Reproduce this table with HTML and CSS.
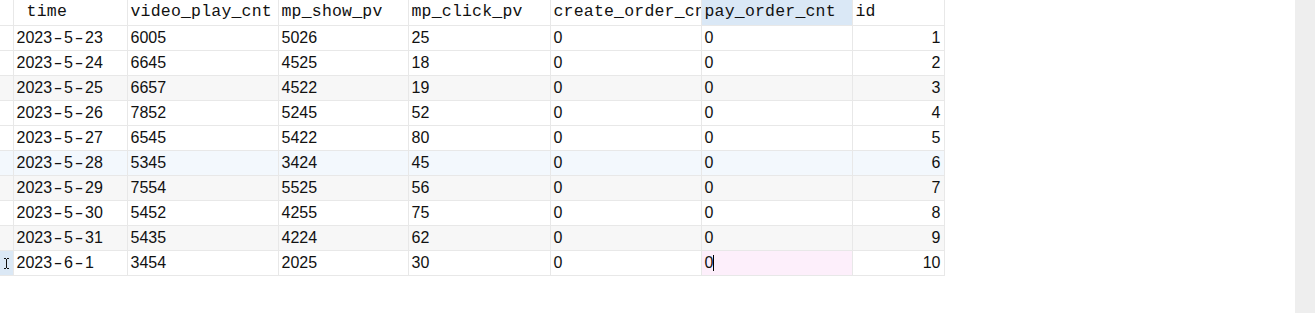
FILE: index.html
```html
<!DOCTYPE html>
<html lang="en">
<head>
  <meta charset="UTF-8" />
  <title>Table data</title>
  <link rel="stylesheet" href="styles.css">
</head>
<body>
  <div class="page">
    <div class="grid-area">
      <table class="grid">
        <colgroup>
          <col class="c-gut"><col class="c-time"><col class="c-video"><col class="c-show">
          <col class="c-click"><col class="c-create"><col class="c-pay"><col class="c-id">
        </colgroup>
        <thead>
          <tr>
            <th class="gut"></th>
            <th> time</th>
            <th>video_play_cnt</th>
            <th>mp_show_pv</th>
            <th>mp_click_pv</th>
            <th>create_order_cnt</th>
            <th class="sel-head">pay_order_cnt</th>
            <th>id</th>
          </tr>
        </thead>
        <tbody>
          <tr><td class="gut"></td><td>2023<span class="d">-</span>5<span class="d">-</span>23</td><td>6005</td><td>5026</td><td>25</td><td>0</td><td>0</td><td class="num">1</td></tr>
          <tr><td class="gut"></td><td>2023<span class="d">-</span>5<span class="d">-</span>24</td><td>6645</td><td>4525</td><td>18</td><td>0</td><td>0</td><td class="num">2</td></tr>
          <tr class="alt"><td class="gut"></td><td>2023<span class="d">-</span>5<span class="d">-</span>25</td><td>6657</td><td>4522</td><td>19</td><td>0</td><td>0</td><td class="num">3</td></tr>
          <tr><td class="gut"></td><td>2023<span class="d">-</span>5<span class="d">-</span>26</td><td>7852</td><td>5245</td><td>52</td><td>0</td><td>0</td><td class="num">4</td></tr>
          <tr><td class="gut"></td><td>2023<span class="d">-</span>5<span class="d">-</span>27</td><td>6545</td><td>5422</td><td>80</td><td>0</td><td>0</td><td class="num">5</td></tr>
          <tr class="hover"><td class="gut"></td><td>2023<span class="d">-</span>5<span class="d">-</span>28</td><td>5345</td><td>3424</td><td>45</td><td>0</td><td>0</td><td class="num">6</td></tr>
          <tr class="alt"><td class="gut"></td><td>2023<span class="d">-</span>5<span class="d">-</span>29</td><td>7554</td><td>5525</td><td>56</td><td>0</td><td>0</td><td class="num">7</td></tr>
          <tr><td class="gut"></td><td>2023<span class="d">-</span>5<span class="d">-</span>30</td><td>5452</td><td>4255</td><td>75</td><td>0</td><td>0</td><td class="num">8</td></tr>
          <tr class="alt"><td class="gut"></td><td>2023<span class="d">-</span>5<span class="d">-</span>31</td><td>5435</td><td>4224</td><td>62</td><td>0</td><td>0</td><td class="num">9</td></tr>
          <tr>
            <td class="gut active"><svg width="7" height="11" viewBox="0 0 7 11"><path d="M1 0.5h2M4 0.5h2M3.5 1v9M1 10.5h2M4 10.5h2" stroke="#111" stroke-width="1" fill="none"/></svg></td>
            <td>2023<span class="d">-</span>6<span class="d">-</span>1</td><td>3454</td><td>2025</td><td>30</td><td>0</td>
            <td class="editing">0<span class="caret"></span></td><td class="num">10</td>
          </tr>
        </tbody>
      </table>
    </div>
    <div class="scrollbar"></div>
  </div>
</body>
</html>
```

FILE: styles.css
```css
body {
  margin: 0;
  background: #fff;
  font-family: 'Liberation Sans', Arial, sans-serif;
  color: #111;
}
.page {
  display: flex;
  height: 313px;
}
.grid-area {
  flex: 1;
}
.scrollbar {
  width: 20px;
  background: #eeeeee;
}
.grid {
  border-collapse: collapse;
  table-layout: fixed;
  width: 944px;
}
.c-gut { width: 13px; }
.c-time { width: 114px; }
.c-video { width: 151px; }
.c-show { width: 130px; }
.c-click { width: 142px; }
.c-create { width: 151px; }
.c-pay { width: 151px; }
.c-id { width: 92px; }
.grid th, .grid td {
  height: 25px;
  padding: 1px 3px 0;
  border: 1px solid #e8e8e8;
  border-top: none;
  white-space: pre;
  overflow: hidden;
  text-align: left;
  vertical-align: middle;
  box-sizing: border-box;
  line-height: 18px;
}
.grid tr > :last-child {
  border-right: 1px solid #e8e8e8;
}
.grid th {
  font-family: 'Liberation Mono', 'DejaVu Sans Mono', monospace;
  font-weight: normal;
  font-size: 16.5px;
  letter-spacing: 0.2px;
  padding-top: 0;
}
.grid td {
  font-size: 16px;
}
.grid tr > :first-child {
  border-left: none;
}
.grid .gut {
  padding: 0;
  white-space: normal;
}
.grid .sel-head {
  background: #dae8f6;
}
.grid .num {
  text-align: right;
}
.grid tr.alt td {
  background: #f7f7f7;
}
.grid tr.hover td {
  background: #f3f8fd;
}
.grid .gut.active {
  background: #dbe8f5;
  text-align: center;
}
.grid .gut svg {
  display: block;
  margin: 1px auto 0;
}
.grid .editing {
  background: #fdeffb;
}
.caret {
  display: inline-block;
  width: 1px;
  height: 16px;
  background: #000;
  vertical-align: -3px;
}
.d {
  display: inline-block;
  width: 12px;
  text-align: center;
  transform: scaleX(1.6);
}
```
